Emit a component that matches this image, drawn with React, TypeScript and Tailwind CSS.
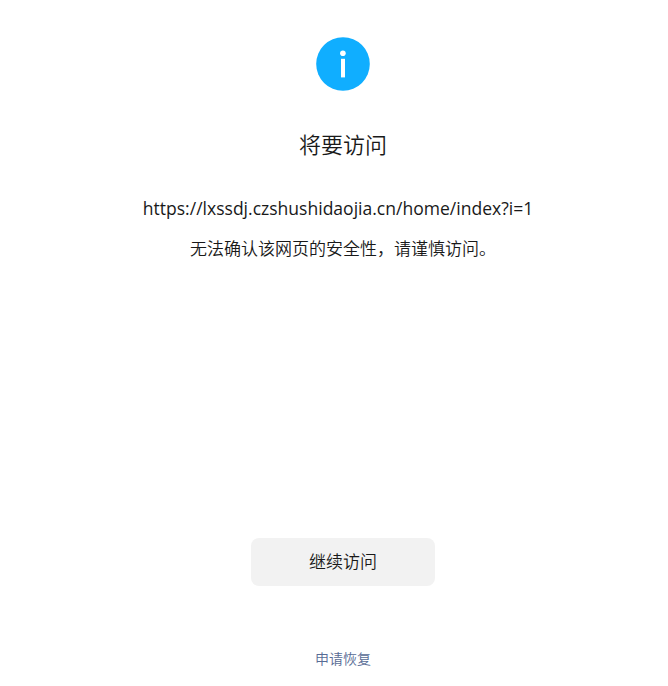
const pageUrl = "https://lxssdj.czshushidaojia.cn/home/index?i=1";

function InfoIcon() {
  return (
    <svg className="h-[54px] w-[54px]" viewBox="0 0 54 54" aria-hidden="true">
      <circle cx="27" cy="27" r="26.8" fill="#10aeff" />
      <circle cx="26.9" cy="16.3" r="2.8" fill="#fff" />
      <path d="M25 21.8h4v18.6h-4z" fill="#fff" />
    </svg>
  );
}

export default function App() {
  return (
    <main className="flex h-[686px] w-full flex-col items-center bg-white pt-[37px] pl-[18px] font-['Open_Sans','Noto_Sans_CJK_SC',sans-serif] font-[350] text-[#191919]">
      <InfoIcon />
      <h1 className="mt-[37px] text-[22px] leading-8 font-[350]">将要访问</h1>
      <p className="mt-8 mr-[10px] text-[17.55px] leading-8 font-normal whitespace-nowrap">
        {pageUrl}
      </p>
      <p className="mt-[9px] text-[17px] leading-8 whitespace-nowrap">
        无法确认该网页的安全性，请谨慎访问。
      </p>
      <button className="mt-[273px] h-12 w-[184px] rounded-lg bg-[#f2f2f2] text-[17px]">
        继续访问
      </button>
      <a href="#" className="mt-[63px] text-sm leading-5 text-[#576b95]">
        申请恢复
      </a>
    </main>
  );
}
